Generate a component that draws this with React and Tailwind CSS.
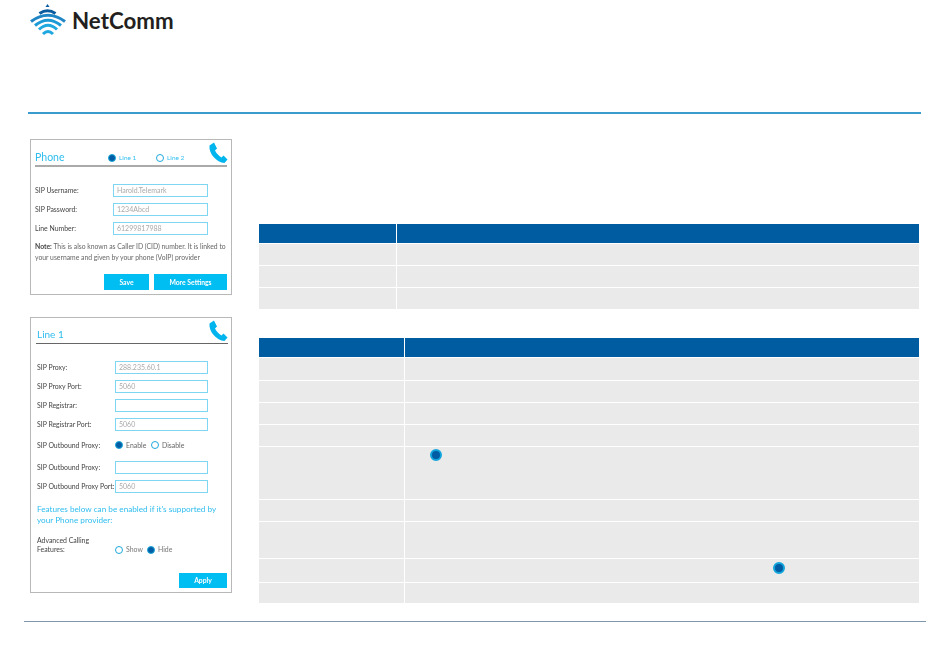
const CYAN = "text-[#2fbdee]";

function PhoneIcon() {
  return (
    <svg viewBox="0 0 20 22" className="w-[20px] h-[22px]" fill="none">
      <path d="M1.5 3.5 L6 0.5 L9 6.5 L7 8.5 C8.5 11.5 11 14 13.5 15.5 L15.5 13.5 L19.5 17.5 L16.5 21 C8.5 20.5 0.5 11.5 1.5 3.5 Z" fill="#00b5ee" />
    </svg>
  );
}

function Logo() {
  return (
    <svg viewBox="0 0 36 32" className="w-[36px] h-[32px]" fill="none" strokeWidth="3">
      <path d="M17.5 0 L19.5 3 L15.5 3 Z" fill="#0b5c9e" />
      <path d="M9.5 9.5 Q17.5 4 25.5 9.5" stroke="#0b5c9e" />
      <path d="M1 17.5 Q18 5 35 17.5" stroke="#1f85c4" />
      <path d="M5 21.5 Q18 11 31 21.5" stroke="#1d9ad6" />
      <path d="M9 25.5 Q18 17 27 25.5" stroke="#1fa8e0" />
      <path d="M13 30 Q18 25 23 30" stroke="#1fa8e0" />
    </svg>
  );
}

function Radio({ on }) {
  return (
    <span className={`inline-block shrink-0 w-[8px] h-[8px] rounded-full border border-[#1fa9dc] ${on ? "bg-[#005da3]" : "bg-white"}`} />
  );
}

function Field({ label, value, inputW = "w-[93px]" }) {
  return (
    <div className="flex items-center h-[13px]">
      <span className="w-[78px] shrink-0 text-[6.9px] text-[#444] whitespace-nowrap">{label}</span>
      <div className={`${inputW} h-[13px] border border-[#7fd6f3] bg-white px-[3px] text-[7px] leading-[11px] text-[#aaa]`}>{value}</div>
    </div>
  );
}

function Panel1() {
  return (
    <section className="relative w-[202px] h-[156px] border border-[#b8b8b8] bg-white pl-[4px] pr-[4px] pt-[12px]">
      <div className="absolute right-[3px] top-[2px]"><PhoneIcon /></div>
      <div className="flex items-center h-[11px] border-b-2 border-[#aaaaaa] pb-[2px] box-content">
        <span className={`w-[73px] text-[10.5px] ${CYAN}`}>Phone</span>
        <Radio on />
        <span className={`ml-[3px] w-[37px] text-[6.5px] ${CYAN}`}>Line 1</span>
        <Radio />
        <span className={`ml-[3px] text-[6.5px] ${CYAN}`}>Line 2</span>
      </div>
      <div className="mt-[17px] flex flex-col gap-[6px]">
        <Field label="SIP Username:" value="Harold.Telemark" inputW="w-[95px]" />
        <Field label="SIP Password:" value="1234Abcd" inputW="w-[95px]" />
        <Field label="Line Number:" value="61299817988" inputW="w-[95px]" />
      </div>
      <p className="mt-[6px] text-[6.8px] leading-[11px] text-[#666] whitespace-nowrap">
        <span className="font-bold text-[#444]">Note:</span> This is also known as Caller ID (CID) number. It is linked to<br />
        your username and given by your phone (VoIP) provider
      </p>
      <div className="mt-[11px] flex justify-end gap-[5px]">
        <div className="w-[45px] h-[16px] bg-[#00bdf2] text-white text-[6.8px] font-bold leading-[16px] text-center">Save</div>
        <div className="w-[73px] h-[16px] bg-[#00bdf2] text-white text-[6.8px] font-bold leading-[16px] text-center">More Settings</div>
      </div>
    </section>
  );
}

function Panel2() {
  return (
    <section className="relative w-[202px] h-[276px] border border-[#b8b8b8] bg-white pl-[5px] pr-[3px] pt-[9px]">
      <div className="absolute right-[3px] top-[2px]"><PhoneIcon /></div>
      <div className={`h-[14px] border-b border-[#666] box-content pb-[2px] pl-[1px] text-[10px] leading-[14px] ${CYAN}`}>Line 1</div>
      <div className="pl-[1px]">
        <div className="mt-[17px] flex flex-col gap-[6px]">
          <Field label="SIP Proxy:" value="288.235.60.1" />
          <Field label="SIP Proxy Port:" value="5060" />
          <Field label="SIP Registrar:" value="" />
          <Field label="SIP Registrar Port:" value="5060" />
        </div>
        <div className="mt-[10px] flex items-center h-[8px] text-[6.9px] text-[#666]">
          <span className="w-[78px] text-[#444]">SIP Outbound Proxy:</span>
          <Radio on />
          <span className="ml-[3px] w-[25px]">Enable</span>
          <Radio />
          <span className="ml-[3px]">Disable</span>
        </div>
        <div className="mt-[12px] flex flex-col gap-[6px]">
          <Field label="SIP Outbound Proxy:" value="" />
          <Field label="SIP Outbound Proxy Port:" value="5060" />
        </div>
        <p className={`mt-[11px] text-[8.2px] leading-[11px] whitespace-nowrap ${CYAN}`}>
          Features below can be enabled if it's supported by<br />your Phone provider:
        </p>
        <div className="mt-[10px] flex items-end text-[6.9px] leading-[9px]">
          <span className="w-[78px] text-[#444]">Advanced Calling<br />Features:</span>
          <div className="flex items-center text-[#777]">
            <Radio />
            <span className="ml-[3px] w-[21px]">Show</span>
            <Radio on />
            <span className="ml-[3px]">Hide</span>
          </div>
        </div>
        <div className="mt-[19px] flex justify-end pr-[1px]">
          <div className="w-[48px] h-[15px] bg-[#00bdf2] text-white text-[6.8px] font-bold leading-[15px] text-center">Apply</div>
        </div>
      </div>
    </section>
  );
}

function Dot({ className }) {
  return <span className={`absolute w-[12px] h-[12px] rounded-full bg-[#005da3] border-2 border-[#12a5dc] ${className}`} />;
}

function Table({ col, rows }) {
  return (
    <div className="flex flex-col gap-[1px]">
      <div className="flex gap-[1px] h-[19px]">
        <div className={`${col} shrink-0 bg-[#005ca1]`} />
        <div className="flex-1 bg-[#005ca1]" />
      </div>
      {rows.map((r, i) => (
        <div key={i} className="flex gap-[1px]" style={{ height: r.h }}>
          <div className={`${col} shrink-0 bg-[#eaeaea]`} />
          <div className="relative flex-1 bg-[#eaeaea]">
            {r.dot && <Dot className={r.dot} />}
          </div>
        </div>
      ))}
    </div>
  );
}

const firstRows = [{ h: 21 }, { h: 21 }, { h: 21 }];
const secondRows = [
  { h: 22 },
  { h: 21 },
  { h: 21 },
  { h: 21 },
  { h: 52, dot: "left-[25px] top-[2px]" },
  { h: 21 },
  { h: 36 },
  { h: 23, dot: "left-[368px] top-[3px]" },
  { h: 20 },
];

export default function App() {
  return (
    <div className="w-[950px] h-[660px] bg-white flex flex-col font-['Lato',sans-serif] overflow-hidden">
      <header className="h-[112px] pl-[30px] pt-[4px]">
        <div className="flex items-start gap-[6px]">
          <Logo />
          <span className="mt-[2px] text-[22.3px] leading-[30px] font-bold text-[#231f20]">NetComm</span>
        </div>
      </header>
      <div className="mx-[28px] w-[893px] h-[2px] bg-[#3a9ccc]" />
      <main className="flex-1 flex pl-[30px] pt-[25px]">
        <div className="w-[202px] flex flex-col gap-[22px] blur-[0.35px]">
          <Panel1 />
          <Panel2 />
        </div>
        <div className="ml-[27px] w-[660px] pt-[85px] flex flex-col gap-[29px]">
          <Table col="w-[137px]" rows={firstRows} />
          <Table col="w-[145px]" rows={secondRows} />
        </div>
      </main>
      <div className="mx-[24px] mb-[38px] w-[902px] h-px bg-[#7f96ad]" />
    </div>
  );
}
